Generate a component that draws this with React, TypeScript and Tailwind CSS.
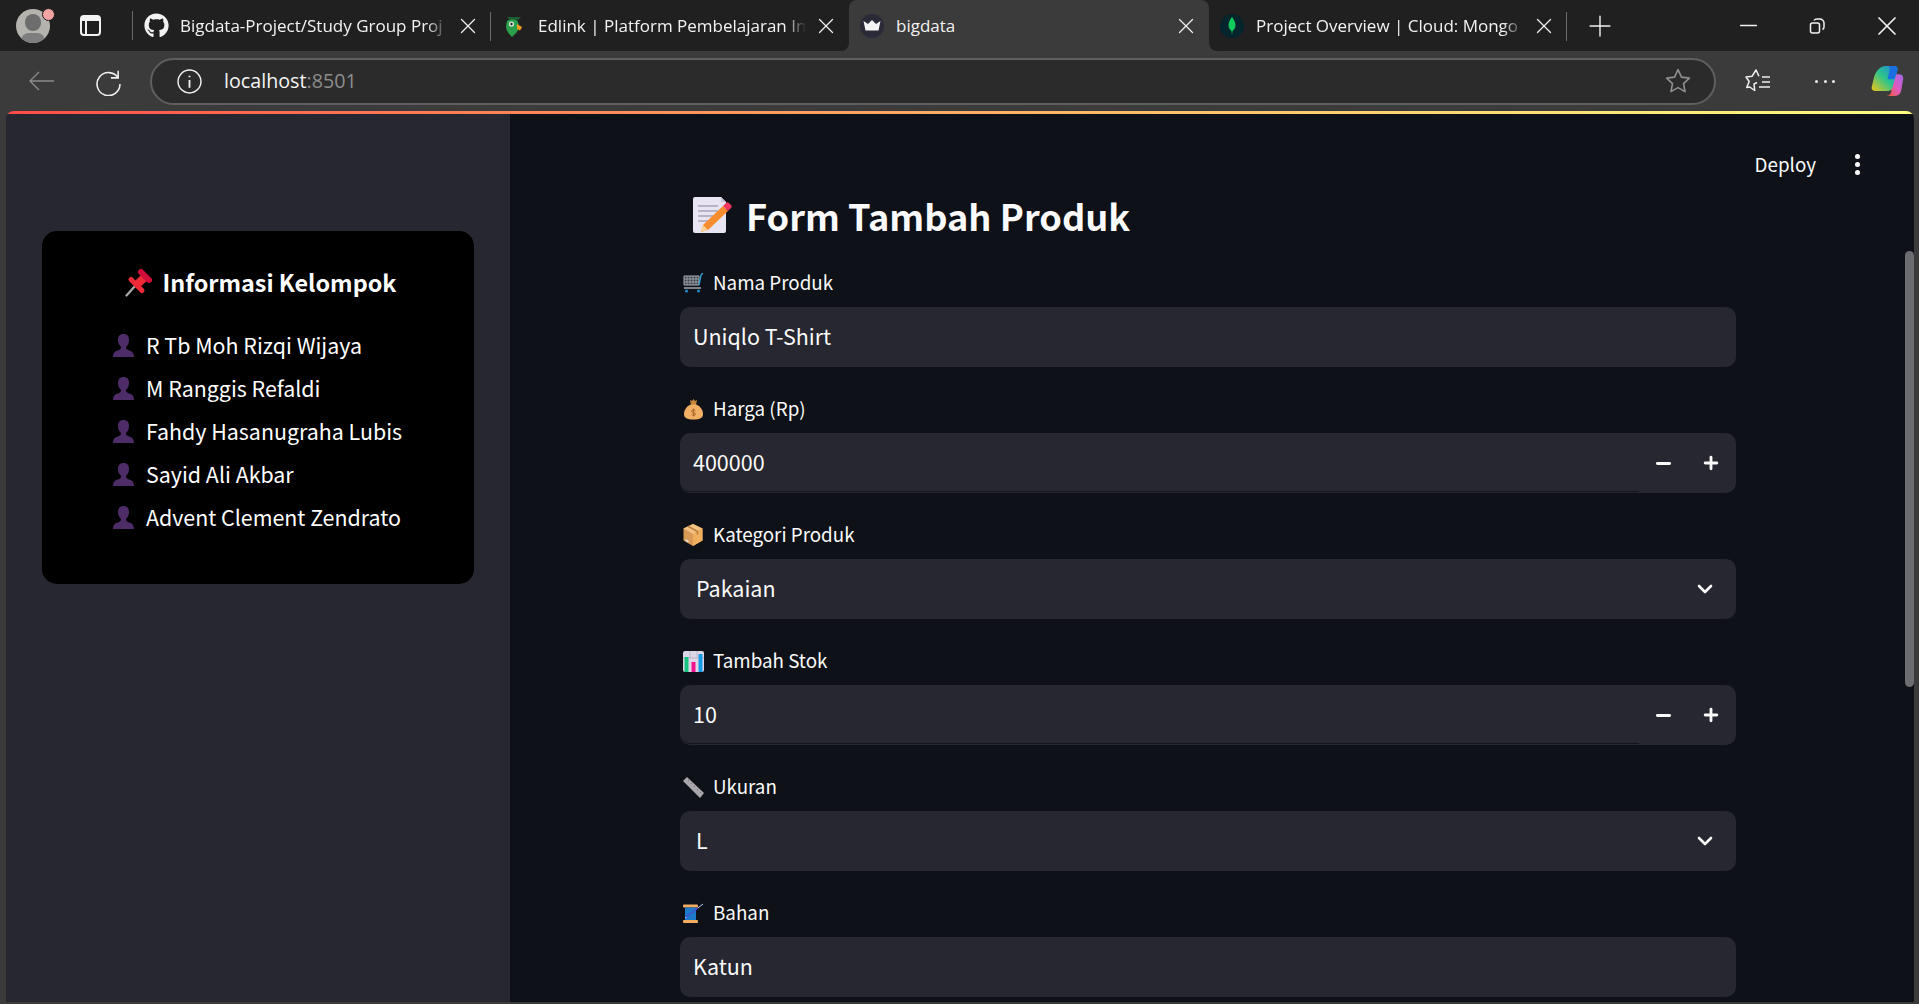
import { ChevronDown, Minus, Plus, X } from "lucide-react";
import { FaGithub } from "react-icons/fa";
import type { ReactNode } from "react";

const appFont = "font-['Noto_Sans_CJK_SC','Noto_Sans',sans-serif]";
const chromeFont = "font-['Open_Sans','Noto_Sans',sans-serif]";

const MemoIcon = () => (
    <svg viewBox="0 0 40 36" className="w-[40px] h-[36px]">
        <path d="M1 2a2 2 0 0 1 2-2h26l5 5v29a2 2 0 0 1-2 2H3a2 2 0 0 1-2-2z" fill="#e8e4f2" />
        <path d="M29 0l5 5h-5z" fill="#c9c4da" />
        <path d="M6 9h20M6 14h20M6 19h15M6 24h10" stroke="#a9a3bd" strokeWidth="1.6" />
        <path d="M11 28L31 9l5 5-20 19-7 2z" fill="#f78c2e" />
        <path d="M9 35l2-7 5 5z" fill="#f9d59c" />
        <path d="M31 9l3-3c1-1 2-1 3 0l2 2c1 1 1 2 0 3l-3 3z" fill="#f0365f" />
    </svg>
);

const CartIcon = () => (
    <svg viewBox="0 0 21 20" className="w-[21px] h-[20px]">
        <path d="M1 3h15v9H1z" fill="#3a3f48" stroke="#aab0b8" strokeWidth="1" />
        <path d="M4 3v9M7 3v9M10 3v9M13 3v9M1 6h15M1 9h15" stroke="#aab0b8" strokeWidth=".8" />
        <path d="M16 12l2-10 2-2" fill="none" stroke="#2f9fd6" strokeWidth="1.4" />
        <path d="M1 15h17" stroke="#9aa0a8" strokeWidth="1.6" />
        <circle cx="3.5" cy="18" r="1.6" fill="#1f86c6" />
        <circle cx="15.5" cy="18" r="1.6" fill="#1f86c6" />
    </svg>
);

const MoneyBagIcon = () => (
    <svg viewBox="0 0 21 21" className="w-[21px] h-[21px]">
        <path d="M7 1l2 1 1.500-2 1.500 2 2-1-1 5H8z" fill="#c9853a" />
        <path d="M8 5.500h5c5 2 7 6 7 9.500 0 4-3 5.500-9.500 5.500S1 19 1 15c0-3.500 2-7.500 7-9.500z" fill="#f2b065" />
        <path d="M10.500 9.500v8M12.500 11.500c-1-1-4-1-4 .7s4 1 4 2.800-3 1.500-4 .5" fill="none" stroke="#a9662a" strokeWidth="1" />
    </svg>
);

const BoxIcon = () => (
    <svg viewBox="0 0 20 22" className="w-[20px] h-[22px]">
        <path d="M10 0l9.500 4.500v12L10 22 .5 16.500v-12z" fill="#d89a55" />
        <path d="M10 0l9.500 4.500L10 10 .5 4.500z" fill="#f3c283" />
        <path d="M10 10l9.500-5.500v12L10 22z" fill="#f0ae5f" />
        <path d="M5 2.200l9.500 5.300v3" fill="none" stroke="#b97f3d" strokeWidth="1.600" />
        <path d="M2.500 15l3 1.700v2l-3-1.700z" fill="#e9e4da" />
    </svg>
);

const ChartIcon = () => (
    <svg viewBox="0 0 21 21" className="w-[21px] h-[21px]">
        <rect width="21" height="21" rx="2" fill="#dcd6e6" />
        <path d="M0 7h21M7 0v7M14 0v7" stroke="#b5aec4" strokeWidth=".8" />
        <rect x="1.500" y="6" width="4" height="15" fill="#19c37d" />
        <rect x="8.500" y="11" width="4" height="10" fill="#f0148c" />
        <rect x="15.500" y="3" width="4" height="18" fill="#159be6" />
    </svg>
);

const RulerIcon = () => (
    <svg viewBox="0 0 21 21" className="w-[21px] h-[21px]">
        <path d="M4 0l17 16-4 5L0 4z" fill="#a9a7ad" />
        <path d="M6 3L5 4M9 6L8 7M12 9l-1 1M15 12l-1 1M18 15l-1 1" stroke="#77757c" strokeWidth="1" />
    </svg>
);

const SpoolIcon = () => (
    <svg viewBox="0 0 21 20" className="w-[21px] h-[20px]">
        <rect x="0" y="1.500" width="15" height="3" rx="1" fill="#f2ad62" />
        <rect x="0" y="17" width="15" height="3" rx="1" fill="#f2ad62" />
        <rect x="2" y="4.500" width="11" height="12.500" fill="#1d79c9" />
        <path d="M2 15L20 1" stroke="#c3cdf5" strokeWidth="1" />
        <path d="M3 14L15 5" stroke="#3d3fd1" strokeWidth="1.200" />
    </svg>
);

const PinIcon = () => (
    <svg viewBox="0 0 27 28" className="w-[27px] h-[28px]" fill="none" strokeLinecap="round">
        <path d="M1.500 26.500l9-10" stroke="#a9a9ad" strokeWidth="2.200" />
        <path d="M6 10.500L17 21.500" stroke="#ee2a37" strokeWidth="5" />
        <path d="M11.500 16L20 8" stroke="#ee2a37" strokeWidth="8" strokeLinecap="butt" />
        <path d="M16 3l8 8" stroke="#d10d3b" strokeWidth="6" />
    </svg>
);

const BustIcon = () => (
    <svg viewBox="0 0 21 23" className="w-[21px] h-[23px] shrink-0">
        <path d="M0 23c0-5 3-6 6-7 2-1 2-2 2-3-2-2-3-4-3-7 0-4 2-6 5.500-6S16 2 16 6c0 3-1 5-3 7 0 1 0 2 2 3 3 1 6 2 6 7z" fill="#4d2c68" />
    </svg>
);

const CrownIcon = () => (
    <svg viewBox="0 0 24 24" className="w-[24px] h-[24px]">
        <circle cx="12" cy="12" r="12" fill="#2a2a38" />
        <path d="M3.500 7l4.500 3 4-4 4 4 4.500-3-2 9.500h-13z" fill="#f4f4f6" />
    </svg>
);

const EdlinkIcon = () => (
    <svg viewBox="0 0 20 22" className="w-[20px] h-[22px]">
        <path d="M3 2h14l-3 3H6z" fill="#1c5c33" />
        <path d="M3 6c2-2 10-2 11 1l1 4c0 5-4 8-7 11-3-3-6-6-6-11z" fill="#2aa04a" />
        <circle cx="7.500" cy="9" r="2.600" fill="#dfe8df" />
        <circle cx="7.500" cy="9" r="1.200" fill="#1a2c1f" />
        <path d="M13 9l5 3-2 3.500-3-1.500z" fill="#f59c1c" />
    </svg>
);

const MongoIcon = () => (
    <svg viewBox="0 0 24 24" className="w-[24px] h-[24px]">
        <circle cx="12" cy="12" r="12" fill="#04252c" />
        <path d="M12 3c2.500 3 3.500 6 3.500 8.500 0 3-2 4.500-3 5.500l-.5 4-.5-4c-1-1-3-2.500-3-5.500C8.500 9 9.500 6 12 3z" fill="#12c95c" />
    </svg>
);

const CopilotIcon = () => (
    <svg viewBox="0 0 34 36" preserveAspectRatio="none" className="w-[33px] h-[30px]">
        <defs>
            <linearGradient id="copilotLeft" x1="0" y1="1" x2="1" y2="0">
                <stop offset="0" stopColor="#f5c518" />
                <stop offset=".5" stopColor="#2dc58a" />
                <stop offset="1" stopColor="#1e7fe0" />
            </linearGradient>
            <linearGradient id="copilotRight" x1="0" y1="1" x2="1" y2="0">
                <stop offset="0" stopColor="#ef5b2a" />
                <stop offset=".5" stopColor="#e05bc0" />
                <stop offset="1" stopColor="#a268ea" />
            </linearGradient>
        </defs>
        <path d="M19 10h9c4 0 6 2 5 7l-2 13c-1 4-3 6-7 6h-8c3 0 4-2 5-5z" fill="url(#copilotRight)" />
        <path d="M15 0h9c3 0 4 3 3 6l-5 20c-1 3-3 4-5 4H5c-4 0-5-3-4-6l2-10c1-6 6-14 12-14z" fill="url(#copilotLeft)" />
        <path d="M18 0h6c3 0 4 3 3 6l-3 10h-7l2-10c.5-3 1-5-1-6z" fill="#1a6fe0" />
    </svg>
);

const Tab = ({ icon, title, active, divider, width }: { icon: ReactNode; title: string; active?: boolean; divider?: boolean; width: string }) => (
    <div className={`${width} h-full flex items-center shrink-0 relative pl-[10px] pr-[10px] ${active ? "bg-[#3b3b3b] rounded-t-lg" : ""}`}>
        <div className="w-[26px] flex justify-center shrink-0">{icon}</div>
        <div className={`flex-1 min-w-0 ml-[11px] whitespace-nowrap text-[17px] text-[#f2f2f2] ${active ? "" : "[mask-image:linear-gradient(to_right,black_92%,transparent)]"}`}>
            {title}
        </div>
        <X className="w-[26px] h-[26px] ml-[7px] text-[#f0f0f0] shrink-0" strokeWidth={1.2} />
        {divider && <div className="absolute right-0 top-[12px] w-px h-[29px] bg-[#6a6a6a]" />}
        {active && (
            <>
                <div className="absolute -left-2 bottom-0 w-2 h-2 bg-[#3b3b3b]">
                    <div className="w-full h-full bg-[#202020] rounded-br-lg" />
                </div>
                <div className="absolute -right-2 bottom-0 w-2 h-2 bg-[#3b3b3b]">
                    <div className="w-full h-full bg-[#202020] rounded-bl-lg" />
                </div>
            </>
        )}
    </div>
);

const TabBar = () => (
    <div className={`h-[51px] bg-[#202020] flex items-center shrink-0 ${chromeFont}`}>
        <div className="ml-[16px] w-[34px] h-[34px] rounded-full bg-[#b5b3ae] relative overflow-hidden shrink-0">
            <div className="absolute left-[9px] top-[5px] w-[16px] h-[17px] rounded-full bg-[#6d6d6d]" />
            <div className="absolute left-[5px] top-[24px] w-[24px] h-[16px] rounded-full bg-[#7e7e7e]" />
        </div>
        <div className="w-[13px] h-[13px] rounded-full bg-[#f4a3a3] border border-[#202020] -ml-[8px] -mt-[22px] shrink-0 relative" />
        <div className="ml-[25px] w-[21px] h-[21px] rounded-[4px] border-2 border-[#f2f2f2] shrink-0 flex flex-col">
            <div className="h-[4px] bg-[#f2f2f2]" />
            <div className="flex-1 w-[5px] border-r-2 border-[#f2f2f2]" />
        </div>
        <div className="ml-[31px] w-px h-[29px] bg-[#6a6a6a] shrink-0" />
        <Tab width="w-[358px]" divider title="Bigdata-Project/Study Group Proj" icon={<FaGithub className="w-[25px] h-[25px] text-[#f2f2f2]" />} />
        <Tab width="w-[358px]" title="Edlink | Platform Pembelajaran In" icon={<EdlinkIcon />} />
        <Tab width="w-[360px]" title="bigdata" active icon={<CrownIcon />} />
        <Tab width="w-[358px]" divider title="Project Overview | Cloud: Mongo" icon={<MongoIcon />} />
        <Plus className="ml-[16px] w-[34px] h-[34px] text-[#f0f0f0] shrink-0" strokeWidth={1} />
        <div className="flex-1" />
        <Minus className="w-[27px] h-[27px] text-[#f0f0f0] mr-[47px] shrink-0" strokeWidth={1.3} />
        <svg viewBox="0 0 16 16" className="w-[16px] h-[16px] mr-[46px] shrink-0" fill="none" stroke="#f0f0f0" strokeWidth="1.5">
            <rect x="1.500" y="5" width="9" height="10" rx="2" />
            <path d="M5 2.500C5.500 1.500 6.500 1 8 1h3c2 0 4 2 4 4v4c0 1-.5 2-1.500 2.500" />
        </svg>
        <X className="w-[32px] h-[32px] text-[#f0f0f0] mr-[16px] shrink-0" strokeWidth={1.3} />
    </div>
);

const ToolBar = () => (
    <div className={`h-[60px] bg-[#3b3b3b] flex items-center shrink-0 ${chromeFont}`}>
        <svg viewBox="0 0 25 20" className="ml-[29px] w-[25px] h-[20px] shrink-0" fill="none" stroke="#8b8b8b" strokeWidth="1.400">
            <path d="M25 10H1M10 1l-9 9 9 9" />
        </svg>
        <svg viewBox="0 0 24 24" className="ml-[40px] w-[29px] h-[29px] shrink-0" fill="none" stroke="#f0f0f0" strokeWidth="1.300">
            <path d="M20 3v6h-6M20 9a9.500 9.500 0 1 0 1.500 5" />
        </svg>
        <div className="ml-[27px] flex-1 h-[47px] bg-[#2b2b2b] border-2 border-[#5f5f5f] rounded-full flex items-center">
            <svg viewBox="0 0 24 24" className="ml-[25px] w-[25px] h-[25px] shrink-0" fill="none" stroke="#f0f0f0" strokeWidth="1.400">
                <circle cx="12" cy="12" r="11" />
                <path d="M12 10.500V18M12 6.500v1.500" strokeWidth="1.800" />
            </svg>
            <div className="ml-[22px] text-[19.7px] text-[#f5f5f5]">
                localhost<span className="text-[#8e8e8e]">:8501</span>
            </div>
            <div className="flex-1" />
            <svg viewBox="0 0 24 24" className="mr-[23px] w-[26px] h-[26px] shrink-0" fill="none" stroke="#8f8f8f" strokeWidth="1.500">
                <path d="M12 1.500l3.200 6.900 7.300.9-5.400 5.100 1.400 7.400-6.500-3.700-6.500 3.700 1.400-7.400L1.500 9.300l7.300-.9z" strokeLinejoin="round" />
            </svg>
        </div>
        <svg viewBox="0 0 26 26" className="ml-[29px] w-[26px] h-[26px] shrink-0" fill="none" stroke="#f0f0f0" strokeWidth="1.500">
            <path d="M12 14.500l-3 1.500.7 6.500-5-3.500-3 .5 2.500-6L1 9l6-.7L11 2l3 6.300M17 9h8M17 14h8M14 19h11" strokeLinejoin="round" />
        </svg>
        <div className="ml-[44px] w-[20px] flex justify-between shrink-0">
            <div className="w-[3px] h-[3px] rounded-full bg-[#f0f0f0]" />
            <div className="w-[3px] h-[3px] rounded-full bg-[#f0f0f0]" />
            <div className="w-[3px] h-[3px] rounded-full bg-[#f0f0f0]" />
        </div>
        <div className="ml-[36px] mr-[15px] shrink-0 flex">
            <CopilotIcon />
        </div>
    </div>
);

const members = ["R Tb Moh Rizqi Wijaya", "M Ranggis Refaldi", "Fahdy Hasanugraha Lubis", "Sayid Ali Akbar", "Advent Clement Zendrato"];

const Sidebar = () => (
    <aside className="w-[504px] h-full bg-[#262730] shrink-0 pl-[36px] pt-[117px]">
        <div className="w-[432px] h-[353px] bg-black rounded-[15px] pt-[32px] text-white">
            <div className="h-[40px] flex items-center justify-center gap-[11px] pl-[5px]">
                <PinIcon />
                <h3 className="text-[23.4px] font-semibold">Informasi Kelompok</h3>
            </div>
            <ul className="mt-[23px] pl-[71px] flex flex-col gap-[5px]">
                {members.map((name) => (
                    <li key={name} className="h-[38px] flex items-center gap-[12px] text-[21.4px]">
                        <BustIcon />
                        {name}
                    </li>
                ))}
            </ul>
        </div>
    </aside>
);

const FieldLabel = ({ icon, children }: { icon: ReactNode; children: string }) => (
    <label className="h-[36px] mb-[6px] flex items-center text-[18.8px] text-[#fafafa]">
        <span className="w-[33px] flex pl-[3px] shrink-0">{icon}</span>
        <span className="pb-[2px]">{children}</span>
    </label>
);

const TextField = ({ icon, label, value }: { icon: ReactNode; label: string; value: string }) => (
    <div className="mb-[24px]">
        <FieldLabel icon={icon}>{label}</FieldLabel>
        <div className="h-[60px] bg-[#262730] rounded-[10px] flex items-center pl-[13px] pb-[2px] text-[21.5px] text-[#fafafa]">{value}</div>
    </div>
);

const NumberField = ({ icon, label, value }: { icon: ReactNode; label: string; value: string }) => (
    <div className="mb-[24px]">
        <FieldLabel icon={icon}>{label}</FieldLabel>
        <div className="h-[60px] bg-[#262730] rounded-[10px] flex text-[21.5px] text-[#fafafa]">
            <div className="flex-1 h-[59px] border-b border-[#15161d] rounded-bl-[10px] flex items-center pl-[13px]">{value}</div>
            <div className="w-[48px] flex items-center justify-center">
                <Minus className="w-[21px] h-[21px]" strokeWidth={3.2} />
            </div>
            <div className="w-[48px] mr-[1px] flex items-center justify-center">
                <Plus className="w-[20px] h-[20px]" strokeWidth={3.4} />
            </div>
        </div>
    </div>
);

const SelectField = ({ icon, label, value }: { icon: ReactNode; label: string; value: string }) => (
    <div className="mb-[24px]">
        <FieldLabel icon={icon}>{label}</FieldLabel>
        <div className="h-[60px] bg-[#262730] rounded-[10px] flex items-center justify-between pl-[16px] pr-[19px] pb-[1px] text-[21.5px] text-[#fafafa]">
            {value}
            <ChevronDown className="w-[24px] h-[24px]" strokeWidth={2.6} />
        </div>
    </div>
);

const Main = () => (
    <main className="flex-1 h-full bg-[#0e1117] relative overflow-hidden pl-[170px] pr-[178px] pt-[67px]">
        <div className="absolute top-[36px] right-[54px] flex items-center gap-[39px] text-[18.8px] text-[#fafafa]">
            Deploy
            <div className="flex flex-col gap-[3px]">
                <div className="w-[5px] h-[5px] rounded-full bg-[#fafafa]" />
                <div className="w-[5px] h-[5px] rounded-full bg-[#fafafa]" />
                <div className="w-[5px] h-[5px] rounded-full bg-[#fafafa]" />
            </div>
        </div>
        <h1 className="h-[68px] pl-[12px] flex items-center gap-[14px] text-[36.2px] font-semibold text-[#fafafa]">
            <MemoIcon />
            Form Tambah Produk
        </h1>
        <div className="mt-[16px]">
            <TextField icon={<CartIcon />} label="Nama Produk" value="Uniqlo T-Shirt" />
            <NumberField icon={<MoneyBagIcon />} label="Harga (Rp)" value="400000" />
            <SelectField icon={<BoxIcon />} label="Kategori Produk" value="Pakaian" />
            <NumberField icon={<ChartIcon />} label="Tambah Stok" value="10" />
            <SelectField icon={<RulerIcon />} label="Ukuran" value="L" />
            <TextField icon={<SpoolIcon />} label="Bahan" value="Katun" />
        </div>
        <div className="absolute right-0 top-[137px] w-[9px] h-[436px] rounded-full bg-[#6c6d71]" />
    </main>
);

const App = () => {
    return (
        <div className="h-[1004px] w-full overflow-hidden flex flex-col bg-[#3b3b3b]">
            <TabBar />
            <ToolBar />
            <div className={`flex-1 min-h-0 ml-[6px] mr-[5px] mb-[2px] flex flex-col rounded-t-lg overflow-hidden ${appFont}`}>
                <div className="h-[3px] shrink-0 bg-linear-to-r from-[#ff4b4b] to-[#ffff80]" />
                <div className="flex-1 min-h-0 flex">
                    <Sidebar />
                    <Main />
                </div>
            </div>
        </div>
    );
};

export default App;
